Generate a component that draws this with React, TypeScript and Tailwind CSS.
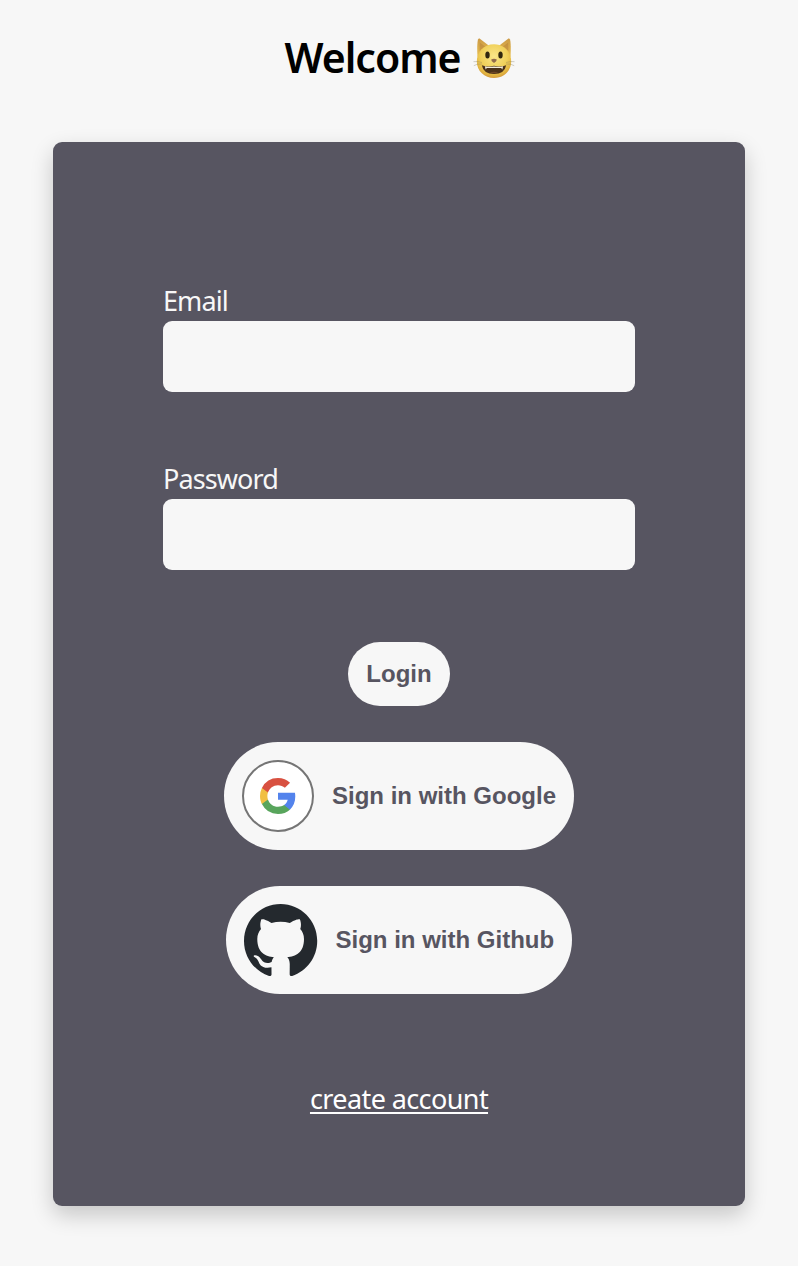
function CatIcon() {
  return (
    <svg viewBox="0 0 42 42" className="h-[42px] w-[42px]" aria-hidden="true">
      <defs>
        <radialGradient id="fur" cx="50%" cy="36%" r="64%">
          <stop offset="0" stopColor="#fae688" />
          <stop offset="0.6" stopColor="#f0d05a" />
          <stop offset="0.87" stopColor="#e2b440" />
          <stop offset="1" stopColor="#d39a3c" />
        </radialGradient>
        <linearGradient id="ear" x1="0" y1="0" x2="0" y2="1">
          <stop offset="0" stopColor="#cc9a45" />
          <stop offset="1" stopColor="#e8c050" />
        </linearGradient>
      </defs>
      <path d="M4.500 20C4 12 4.200 5.500 5 2.500C5.300 1.400 6.300 1.300 7.200 1.900L16 8.800Z" fill="url(#ear)" />
      <path d="M37.500 20C38 12 37.800 5.500 37 2.500C36.700 1.400 35.700 1.300 34.800 1.900L26 8.800Z" fill="url(#ear)" />
      <path d="M6.800 5.500L12 9.500L6.600 14Z" fill="#b67e38" opacity=".5" />
      <path d="M35.200 5.500L30 9.500L35.400 14Z" fill="#b67e38" opacity=".5" />
      <path d="M21 7.200C31 7.200 38.200 15 38.200 24.500C38.200 34 30.500 41 21 41S3.800 34 3.800 24.500C3.800 15 11 7.200 21 7.200Z" fill="url(#fur)" />
      <ellipse cx="14.500" cy="18" rx="2.200" ry="3.500" fill="#30260f" />
      <ellipse cx="27.500" cy="18" rx="2.200" ry="3.500" fill="#30260f" />
      <path d="M18.200 22.500Q21 20.800 23.800 22.500Q24 24.200 21 26Q18 24.200 18.200 22.500Z" fill="#916b4c" />
      <path d="M8.800 28.200Q15 30.500 21 28.800Q27 30.500 33.200 28.200Q31.500 37 21 37T8.800 28.200Z" fill="#4b3219" />
      <path d="M11.800 29.300Q16 30.200 21 29.500Q26 30.200 30.200 29.300L29.300 32.500L28.200 30.900H13.800L12.700 32.500Z" fill="#f3ecdb" />
      <path d="M16.500 35.600Q21 33.700 25.500 35.600Q21 37 16.500 35.600Z" fill="#6f4728" />
      <g fill="none" stroke="#857a62" strokeWidth=".5" opacity=".7">
        <path d="M9 25.500Q4 24 .5 24.700M9 27Q4 26.500 .8 28.700M33 25.500Q38 24 41.500 24.700M33 27Q38 26.500 41.200 28.700" />
      </g>
    </svg>
  );
}

function GoogleIcon() {
  return (
    <span className="flex h-[72px] w-[72px] shrink-0 items-center justify-center rounded-full border-2 border-[#757575] bg-white">
      <svg viewBox="0 0 18 18" className="h-9 w-9" aria-hidden="true">
        <path fill="#5383ec" d="M17.64 9.2c0-.637-.057-1.251-.164-1.84H9v3.481h4.844c-.209 1.125-.843 2.078-1.796 2.717v2.258h2.908c1.702-1.567 2.684-3.874 2.684-6.615z" />
        <path fill="#58a55c" d="M9 18c2.43 0 4.467-.806 5.956-2.18l-2.908-2.259c-.806.54-1.837.86-3.048.86-2.344 0-4.328-1.584-5.036-3.711H.957v2.332A8.997 8.997 0 0 0 9 18z" />
        <path fill="#f1bf42" d="M3.964 10.71A5.41 5.41 0 0 1 3.682 9c0-.593.102-1.17.282-1.71V4.958H.957A8.996 8.996 0 0 0 0 9c0 1.452.348 2.827.957 4.042l3.007-2.332z" />
        <path fill="#d85040" d="M9 3.58c1.321 0 2.508.454 3.44 1.345l2.582-2.58C13.463.891 11.426 0 9 0A8.997 8.997 0 0 0 .957 4.958L3.964 7.29C4.672 5.163 6.656 3.58 9 3.58z" />
      </svg>
    </span>
  );
}

function GithubIcon() {
  return (
    <svg viewBox="0 0 98 96" className="h-[72px] w-[73.5px] shrink-0" aria-hidden="true">
      <path
        fill="#24292e"
        fillRule="evenodd"
        d="M48.854 0C21.839 0 0 22 0 49.217c0 21.756 13.993 40.172 33.405 46.69 2.427.49 3.316-1.059 3.316-2.362 0-1.141-.08-5.052-.08-9.127-13.59 2.934-16.42-5.867-16.42-5.867-2.184-5.704-5.42-7.17-5.42-7.17-4.448-3.015.324-3.015.324-3.015 4.934.326 7.523 5.052 7.523 5.052 4.367 7.496 11.404 5.378 14.235 4.074.404-3.178 1.699-5.378 3.074-6.6-10.839-1.141-22.243-5.378-22.243-24.283 0-5.378 1.94-9.778 5.014-13.2-.485-1.222-2.184-6.275.486-13.038 0 0 4.125-1.304 13.426 5.052a46.97 46.97 0 0 1 12.214-1.63c4.125 0 8.33.571 12.213 1.63 9.302-6.356 13.427-5.052 13.427-5.052 2.67 6.763.97 11.816.485 13.038 3.155 3.422 5.015 7.822 5.015 13.2 0 18.905-11.404 23.06-22.324 24.283 1.78 1.548 3.316 4.481 3.316 9.126 0 6.6-.08 11.897-.08 13.526 0 1.304.89 2.853 3.316 2.364 19.412-6.52 33.405-24.935 33.405-46.691C97.707 22 75.788 0 48.854 0z"
      />
    </svg>
  );
}

export default function App() {
  return (
    <main className="flex h-[1266px] w-[798px] flex-col items-center bg-[#f7f7f7] font-['Noto_Sans',sans-serif]">
      <h1 className="flex h-[142px] items-start gap-3 pt-[37px] text-black">
        <span className="w-[177px] pl-px whitespace-nowrap text-[41px] leading-[41px] font-semibold tracking-[-1px]">Welcome</span>
        <CatIcon />
      </h1>
      <form className="flex h-[1064px] w-[692px] flex-col items-center rounded-[9px] bg-[#575561] pt-[141px] text-[#f7f7f7] shadow-[0_9px_22px_rgba(0,0,0,0.2)]">
        <label className="flex w-[472px] flex-col">
          <span className="h-[38px] text-[27px] leading-[36px] tracking-[-0.9px]">Email</span>
          <input type="email" className="h-[71px] rounded-[9px] bg-[#f7f7f7] px-4 text-[#575561] outline-none" />
        </label>
        <label className="mt-[69px] flex w-[472px] flex-col">
          <span className="h-[38px] text-[27px] leading-[36px] tracking-[-0.9px]">Password</span>
          <input type="password" className="h-[71px] rounded-[9px] bg-[#f7f7f7] px-4 text-[#575561] outline-none" />
        </label>
        <div className="mt-[72px] flex flex-col items-center gap-9 font-['Liberation_Sans',sans-serif] text-2xl leading-[28px] font-bold text-[#575561]">
          <button type="button" className="h-16 w-[102px] rounded-[32px] bg-[#f7f7f7]">Login</button>
          <button type="button" className="flex h-[108px] w-[350px] items-center gap-[18px] rounded-[54px] bg-[#f7f7f7] pl-[18px] whitespace-nowrap">
            <GoogleIcon />
            Sign in with Google
          </button>
          <button type="button" className="flex h-[108px] w-[346px] items-center gap-[18px] rounded-[54px] bg-[#f7f7f7] pl-[18px] whitespace-nowrap">
            <GithubIcon />
            Sign in with Github
          </button>
        </div>
        <a href="#" className="mt-[86px] text-[27px] leading-[38px] tracking-[-0.6px] text-white underline decoration-2 underline-offset-[3px]">create account</a>
      </form>
    </main>
  );
}
